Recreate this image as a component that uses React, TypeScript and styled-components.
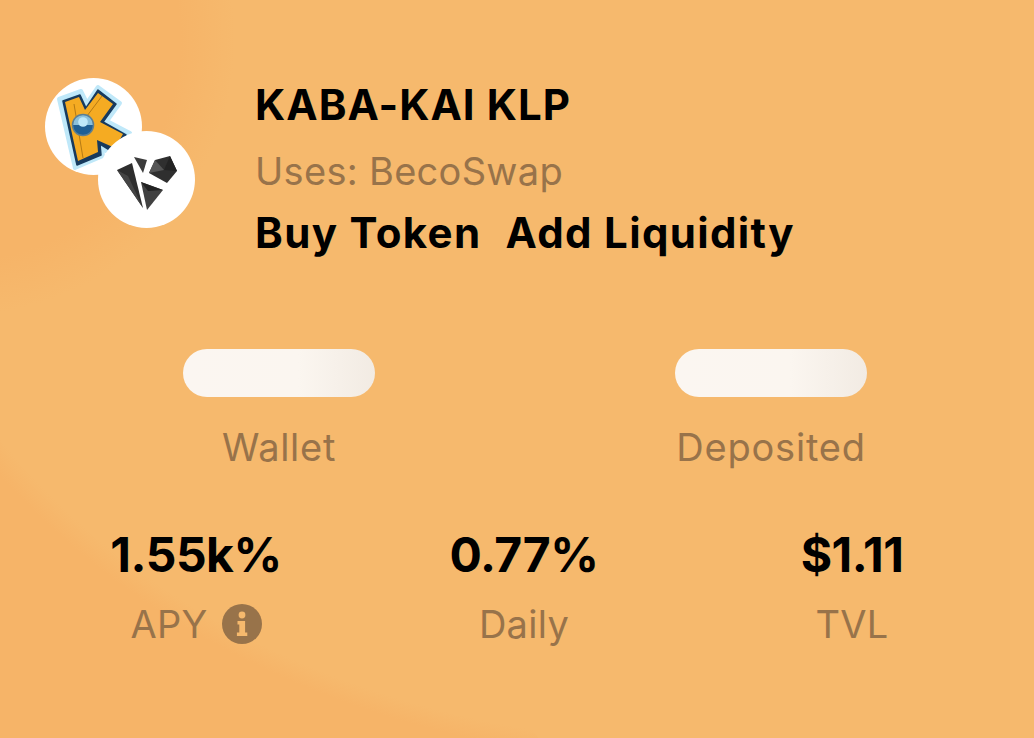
import React from "react";
import styled, { createGlobalStyle } from "styled-components";

const Global = createGlobalStyle`
  html, body { margin: 0; padding: 0; }
  body { font-family: "Inter", "Liberation Sans", sans-serif; }
`;

const Card = styled.div`
  width: 1034px;
  height: 738px;
  box-sizing: border-box;
  overflow: hidden;
  padding: 78px 0 0 45px;
  background-color: #f6b468;
  background-image:
    radial-gradient(circle 275px at -40px 40px, #f6b468 80%, rgba(246, 180, 104, 0) 100%),
    radial-gradient(circle 520px at 950px 420px, #f6b96d 100%, rgba(246, 185, 109, 0) 100%),
    radial-gradient(ellipse 849px 663px at 700px 100px, #f6b96d 97%, rgba(246, 185, 109, 0) 100%);
  display: flex;
  flex-direction: column;
`;

const Header = styled.div`
  display: flex;
  align-items: flex-start;
`;

const Logos = styled.div`
  position: relative;
  width: 150px;
  height: 150px;
  flex: none;
`;

const LogoCircle = styled.div<{ $front?: boolean }>`
  position: absolute;
  left: ${(p) => (p.$front ? 53 : 0)}px;
  top: ${(p) => (p.$front ? 53 : 0)}px;
  width: 97px;
  height: 97px;
  border-radius: 50%;
  background: #fff;
  display: flex;
`;

const Info = styled.div`
  margin-left: 60px;
  margin-top: 1px;
  display: flex;
  flex-direction: column;
`;

const Title = styled.div`
  font-size: 42px;
  line-height: 52px;
  font-weight: 700;
  letter-spacing: 1.05px;
  color: #000;
`;

const Uses = styled.div`
  font-size: 38px;
  line-height: 44px;
  margin-top: 18px;
  font-weight: 400;
  letter-spacing: 0.3px;
  color: #98734a;
`;

const Links = styled.div`
  display: flex;
  gap: 24px;
  margin-top: 15px;
`;

const LinkText = styled.a`
  font-size: 42px;
  line-height: 50px;
  font-weight: 700;
  letter-spacing: 1.35px;
  color: #000;
`;

const Balances = styled.div`
  display: flex;
  margin: 91px 0 0 138px;
  gap: 300px;
`;

const Balance = styled.div`
  width: 192px;
  display: flex;
  flex-direction: column;
  align-items: center;
`;

const Pill = styled.div`
  width: 192px;
  height: 48px;
  border-radius: 24px;
  background: linear-gradient(90deg, #fbf6f1 0%, #fbf6f0 60%, #f2ebe3 100%);
`;

const Muted = styled.div<{ $spacing: number }>`
  font-size: 38px;
  line-height: 46px;
  font-weight: 400;
  letter-spacing: ${(p) => p.$spacing}px;
  color: #98734a;
  display: flex;
  align-items: center;
  gap: 14px;
`;

const BalanceLabel = styled(Muted)`
  margin-top: 27px;
`;

const Stats = styled.div`
  display: flex;
  margin: 55px 0 0 0;
`;

const Stat = styled.div<{ $width: number; $shift: number }>`
  width: ${(p) => p.$width}px;
  margin-left: ${(p) => p.$shift}px;
  display: flex;
  flex-direction: column;
  align-items: center;
`;

const StatValue = styled.div`
  font-size: 48px;
  line-height: 60px;
  font-weight: 700;
  letter-spacing: -0.5px;
  color: #000;
`;

const StatLabel = styled(Muted)`
  margin-top: 16px;
`;

const InfoIcon = () => (
  <svg width="40" height="40" viewBox="0 0 40 40" aria-hidden="true">
    <circle cx="20" cy="20" r="20" fill="#98734a" />
    <circle cx="20" cy="11" r="3.4" fill="#f6b96d" />
    <path d="M15.5 17h7.6v11.4h2.2V32H14.9v-3.6h2.4v-7.9h-1.8z" fill="#f6b96d" />
  </svg>
);

const KLogo = () => (
  <svg width="97" height="97" viewBox="0 0 97 97" aria-hidden="true">
    <path d="M14 21 L36 13 L42 25 L53 9 L75 25 L62 43 L85 55 L73 79 L57 71 L58 78 L30 90 Z" fill="#a9e1f7" stroke="#bfe8f9" strokeWidth="4" strokeLinejoin="round" />
    <path d="M18 23 L35 17 L41 30 L53 12 L71 26 L58 44 L81 57 L71 76 L55 66 L56 77 L32 87 Z" fill="#173a5e" stroke="#173a5e" strokeWidth="1.5" strokeLinejoin="round" />
    <path d="M20 24 L34 19 L40 32 L53 15 L68 26 L55 44 L78 56 L70 70 L52 62 L53 74 L33 83 Z" fill="#f5ab22" />
    <path d="M29 26 L38 80" stroke="#b57a14" strokeWidth="1" fill="none" />
    <path d="M39 42 L57 18" stroke="#b57a14" strokeWidth="1" fill="none" />
    <circle cx="38" cy="47" r="10.5" fill="#8cc0da" />
    <path d="M27.5 47a10.5 10.5 0 0 0 21 0z" fill="#1f5f94" />
    <circle cx="38" cy="44" r="4.8" fill="#bfe9fa" />
    <circle cx="38" cy="47" r="10.5" fill="none" stroke="#5d7f92" strokeWidth="1.5" />
  </svg>
);

const KaiLogo = () => (
  <svg width="97" height="97" viewBox="0 0 97 97" aria-hidden="true">
    <path d="M19 39 L34 32 L45 77 Z" fill="#2e2e2e" />
    <path d="M19 39 L30 45 L45 77 Z" fill="#444" />
    <path d="M36 26 L49 29 L45 42 Z" fill="#3b3b3b" />
    <path d="M51 42 L57 29 L72 25 L79 40 L69 52 Z" fill="#2f2f2f" />
    <path d="M51 42 L57 29 L66 39 Z" fill="#555" />
    <path d="M66 39 L72 25 L79 40 Z" fill="#232323" />
    <path d="M43 51 L65 59 L49 79 Z" fill="#414141" />
    <path d="M43 51 L65 59 L50 60 Z" fill="#222" />
  </svg>
);

export default function App() {
  return (
    <Card>
      <Global />
      <Header>
        <Logos>
          <LogoCircle><KLogo /></LogoCircle>
          <LogoCircle $front><KaiLogo /></LogoCircle>
        </Logos>
        <Info>
          <Title>KABA-KAI KLP</Title>
          <Uses>Uses: BecoSwap</Uses>
          <Links>
            <LinkText>Buy Token</LinkText>
            <LinkText>Add Liquidity</LinkText>
          </Links>
        </Info>
      </Header>
      <Balances>
        <Balance>
          <Pill />
          <BalanceLabel $spacing={0.7}>Wallet</BalanceLabel>
        </Balance>
        <Balance>
          <Pill />
          <BalanceLabel $spacing={0.8}>Deposited</BalanceLabel>
        </Balance>
      </Balances>
      <Stats>
        <Stat $width={240} $shift={31}>
          <StatValue>1.55k%</StatValue>
          <StatLabel $spacing={0.3}>APY <InfoIcon /></StatLabel>
        </Stat>
        <Stat $width={240} $shift={88}>
          <StatValue>0.77%</StatValue>
          <StatLabel $spacing={0.3}>Daily</StatLabel>
        </Stat>
        <Stat $width={240} $shift={88}>
          <StatValue>$1.11</StatValue>
          <StatLabel $spacing={0.3}>TVL</StatLabel>
        </Stat>
      </Stats>
    </Card>
  );
}
